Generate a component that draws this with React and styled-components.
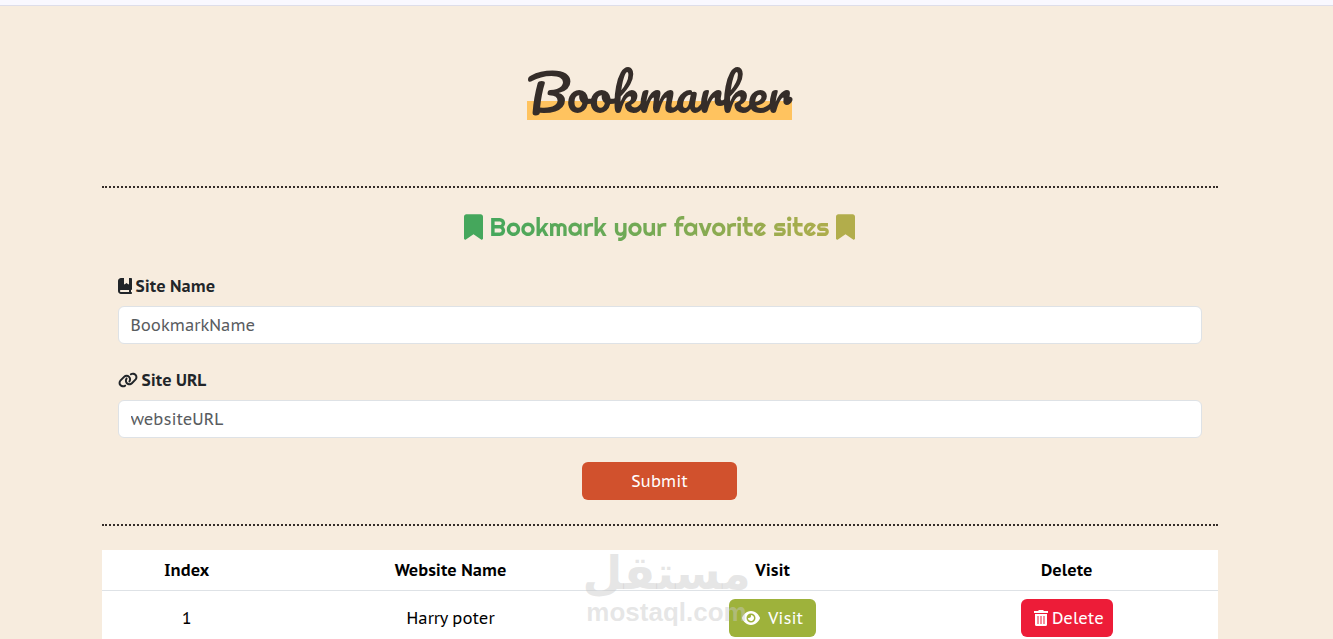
import React, { useState } from 'react'
import styled, { createGlobalStyle } from 'styled-components'
import { FaBookmark, FaBookBookmark, FaLink, FaEye } from 'react-icons/fa6'

const GlobalStyle = createGlobalStyle`
  *, *::before, *::after {
    box-sizing: border-box;
  }
  body {
    margin: 0;
    color: #212529;
    background-color: #f7ecde;
    font-family: 'PT Sans Caption', 'Noto Sans', sans-serif;
    font-size: 16px;
    line-height: 24px;
  }
`

const TopBar = styled.header`
  height: 6px;
  background-color: #f9f8ff;
  border-bottom: 1px solid #dedeea;
`

const Page = styled.main`
  position: relative;
  height: calc(100vh - 6px);
  padding-right: 14px;
  overflow: hidden;
`

const Container = styled.div`
  width: 100%;
  max-width: 1140px;
  margin: 0 auto;
  padding: 0 12px;
`

const TitleRow = styled.div`
  display: flex;
  justify-content: center;
  padding: 56px 0 64px;
`

const Title = styled.h1`
  margin: 0;
  color: #352d29;
  font-family: 'Pacifico', 'Lato', cursive;
  font-size: 50px;
  font-weight: 400;
  line-height: 60px;
  background: linear-gradient(#ffc35f, #ffc35f) left bottom 2px / 100% 19px no-repeat;
`

const Section = styled.section`
  padding: 24px 16px;
  border-top: 2px dotted #352d29;
  border-bottom: 2px dotted #352d29;
`

const Heading = styled.h2`
  display: flex;
  justify-content: center;
  align-items: center;
  gap: 7px;
  margin: 0 0 32px;
  font-family: 'Righteous', 'Lato', sans-serif;
  font-size: 25px;
  font-weight: 400;
  line-height: 30px;
`

const HeadingText = styled.span`
  color: transparent;
  background: linear-gradient(to right, #45a75c, #aead4c);
  background-clip: text;
`

const HeadingIcon = styled(FaBookmark)`
  width: 19px;
  height: 26px;
  color: ${({ $color }) => $color};
`

const Form = styled.form`
  display: flex;
  flex-direction: column;
  gap: 24px;
`

const Field = styled.div`
  display: flex;
  flex-direction: column;
  gap: 8px;
`

const Label = styled.label`
  display: flex;
  align-items: center;
  gap: 4px;
  font-weight: 700;
  svg {
    width: ${({ $iconWidth }) => $iconWidth}px;
    height: 16px;
  }
`

const Input = styled.input`
  width: 100%;
  height: 38px;
  padding: 6px 12px;
  color: #212529;
  font: inherit;
  background-color: #fff;
  border: 1px solid #dee2e6;
  border-radius: 6px;
  &::placeholder {
    color: #595c5f;
    opacity: 1;
  }
`

const Button = styled.button`
  display: inline-flex;
  justify-content: center;
  align-items: center;
  height: 38px;
  padding: 0 12px;
  color: #fff;
  font: inherit;
  background-color: ${({ $color }) => $color};
  border: 0;
  border-radius: 6px;
  cursor: pointer;
`

const SubmitButton = styled(Button)`
  align-self: center;
  width: 155px;
  font-weight: 500;
`

const VisitButton = styled(Button)`
  gap: 8px;
  padding: 0 13px;
`

const DeleteButton = styled(Button)`
  gap: 4px;
  padding: 0 9px 0 13px;
`

const Table = styled.table`
  width: 100%;
  margin-top: 24px;
  border-collapse: collapse;
  color: #000;
  text-align: center;
  background-color: #fff;
`

const Cell = styled.td`
  padding: 8px;
  border-bottom: 1px solid #dee2e6;
`

const HeadCell = styled(Cell)`
  font-weight: 700;
`

const Watermark = styled.div`
  position: absolute;
  left: 50%;
  bottom: 12px;
  display: flex;
  flex-direction: column;
  align-items: center;
  transform: translateX(-50%);
  color: rgba(200, 200, 200, 0.45);
  font-family: 'Liberation Sans', sans-serif;
  font-size: 26px;
  font-weight: 700;
  line-height: 30px;
  pointer-events: none;
`

const WatermarkName = styled.span`
  font-family: 'DejaVu Sans', sans-serif;
  font-size: 46px;
  line-height: 48px;
`

const TrashIcon = () => (
  <svg width='14' height='16' viewBox='0 0 14 16' fill='currentColor' aria-hidden='true'>
    <path d='M5 0h4l1 1h4v2H0V1h4z' />
    <path
      fillRule='evenodd'
      d='M1 4h12v10.5a1.500 1.500 0 0 1-1.500 1.500h-9A1.500 1.500 0 0 1 1 14.500zM3.500 6v8h1V6zM6.500 6v8h1V6zM9.500 6v8h1V6z'
    />
  </svg>
)

const App = () => {
  const [siteName, setSiteName] = useState('')
  const [siteUrl, setSiteUrl] = useState('')
  const [bookmarks, setBookmarks] = useState([
    { id: 1, name: 'Harry poter', url: '#' }
  ])

  const addBookmark = event => {
    event.preventDefault()
    if (!siteName || !siteUrl) return
    setBookmarks([...bookmarks, { id: Date.now(), name: siteName, url: siteUrl }])
    setSiteName('')
    setSiteUrl('')
  }

  const removeBookmark = id => setBookmarks(bookmarks.filter(item => item.id !== id))

  return (
    <>
      <GlobalStyle />
      <TopBar />
      <Page>
        <Container>
          <TitleRow>
            <Title>Bookmarker</Title>
          </TitleRow>
          <Section>
            <Heading>
              <HeadingIcon $color='#45a75c' />
              <HeadingText>Bookmark your favorite sites</HeadingText>
              <HeadingIcon $color='#b2ad4b' />
            </Heading>
            <Form onSubmit={addBookmark}>
              <Field>
                <Label htmlFor='siteName' $iconWidth={14}><FaBookBookmark />Site Name</Label>
                <Input
                  id='siteName'
                  placeholder='BookmarkName'
                  value={siteName}
                  onChange={event => setSiteName(event.target.value)}
                />
              </Field>
              <Field>
                <Label htmlFor='siteUrl' $iconWidth={20}><FaLink />Site URL</Label>
                <Input
                  id='siteUrl'
                  placeholder='websiteURL'
                  value={siteUrl}
                  onChange={event => setSiteUrl(event.target.value)}
                />
              </Field>
              <SubmitButton type='submit' $color='#d1512d'>Submit</SubmitButton>
            </Form>
          </Section>
          <Table>
            <thead>
              <tr>
                <HeadCell as='th'>Index</HeadCell>
                <HeadCell as='th'>Website Name</HeadCell>
                <HeadCell as='th'>Visit</HeadCell>
                <HeadCell as='th'>Delete</HeadCell>
              </tr>
            </thead>
            <tbody>
              {bookmarks.map((item, index) => (
                <tr key={item.id}>
                  <Cell>{index + 1}</Cell>
                  <Cell>{item.name}</Cell>
                  <Cell>
                    <VisitButton type='button' $color='#9eb23b' onClick={() => window.open(item.url)}>
                      <FaEye size={18} />Visit
                    </VisitButton>
                  </Cell>
                  <Cell>
                    <DeleteButton type='button' $color='#ed1c38' onClick={() => removeBookmark(item.id)}>
                      <TrashIcon />Delete
                    </DeleteButton>
                  </Cell>
                </tr>
              ))}
            </tbody>
          </Table>
        </Container>
        <Watermark>
          <WatermarkName lang='ar'>مستقل</WatermarkName>
          <span>mostaql.com</span>
        </Watermark>
      </Page>
    </>
  )
}

export default App
